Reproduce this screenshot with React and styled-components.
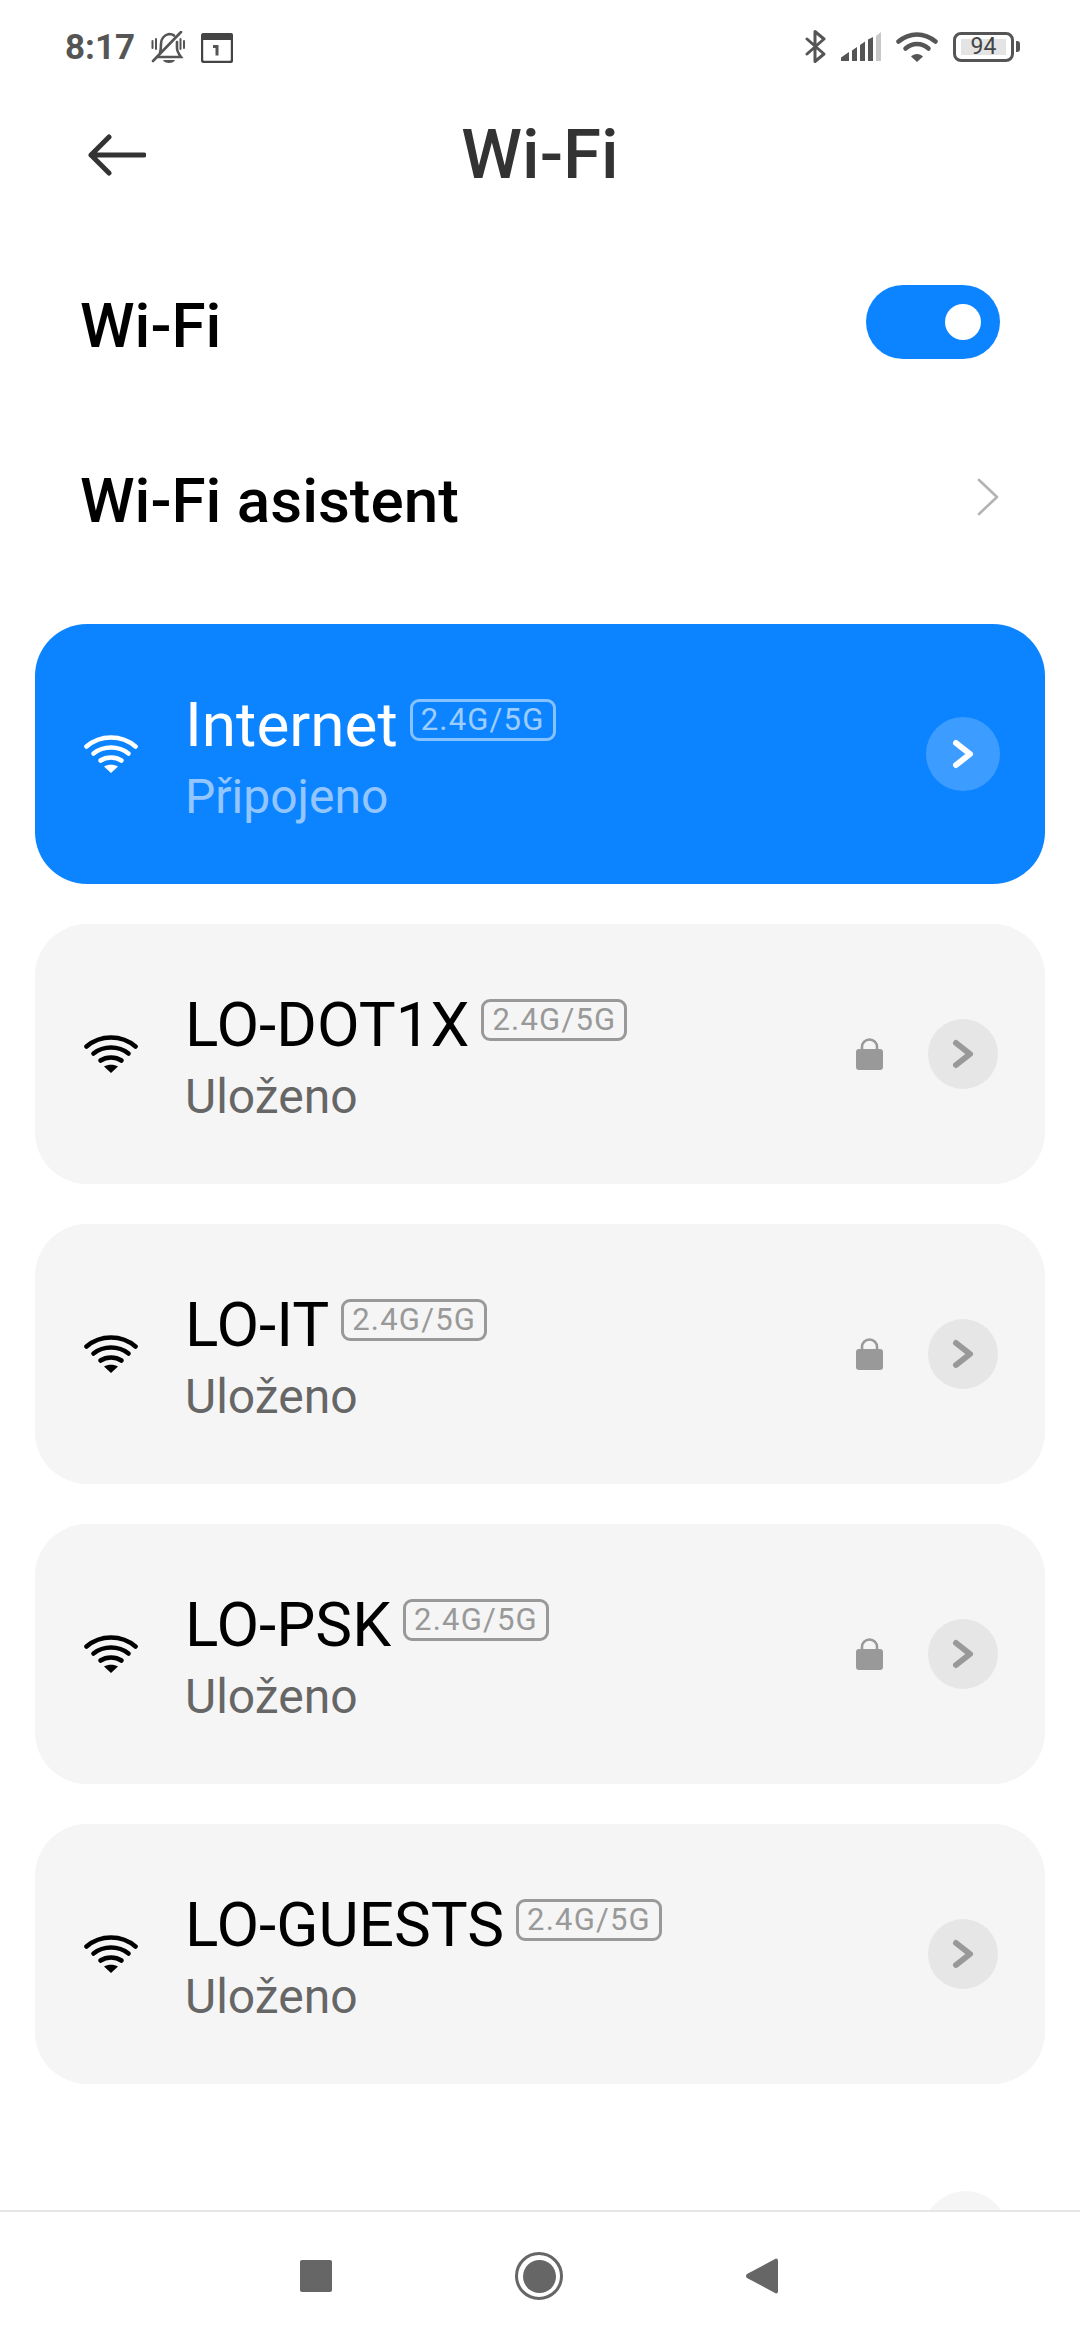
import React from 'react'
import styled, { createGlobalStyle } from 'styled-components'

const networks = [
    { name: 'Internet', status: 'Připojeno', active: true },
    { name: 'LO-DOT1X', status: 'Uloženo', locked: true },
    { name: 'LO-IT', status: 'Uloženo', locked: true },
    { name: 'LO-PSK', status: 'Uloženo', locked: true },
    { name: 'LO-GUESTS', status: 'Uloženo' },
]

const BellOff = () => (
    <svg width="36" height="34" viewBox="0 0 36 34" fill="none" stroke="#555" strokeWidth="2.600" strokeLinecap="round">
        <path d="M10 22c1-3 1-5 1-9 0-5 3-9 8-10 2 0 4 .5 5 1.500" />
        <path d="M27 11v6c0 3 1 5 4 9H7" />
        <path d="M13 29h12c-1 4-11 4-12 0z" fill="#555" stroke="none" />
        <path d="M2.500 10v7M6 8v10M30.500 8v10M34 10v7" strokeWidth="2" />
        <path d="M31 1 3 30" />
    </svg>
)

const CalendarIcon = () => (
    <svg width="32" height="30" viewBox="0 0 32 30">
        <rect x="1" y="1" width="30" height="28" rx="2" fill="none" stroke="#444" strokeWidth="2.400" />
        <rect x="1" y="1" width="30" height="6" fill="#444" />
        <path d="M12 12h5.500v10.500h-3V15H12z" fill="#555" />
    </svg>
)

const BluetoothIcon = () => (
    <svg width="21" height="33" viewBox="0 0 21 33" fill="none" stroke="#555" strokeWidth="3" strokeLinecap="round" strokeLinejoin="round">
        <path d="M2 9l17 15-9 7.500V1.500L19 9 2 24" />
    </svg>
)

const SignalIcon = () => (
    <svg width="40" height="29" viewBox="0 0 40 29">
        <path d="M0 29v-3.500l8-5.500v9z" fill="#555" />
        <path d="M11 29V18.500l5-3.500v14z" fill="#555" />
        <path d="M19 29V13l5-3.500V29z" fill="#555" />
        <path d="M27 29V7.500L32 5v24z" fill="#555" />
        <path d="M35 29V4l5-4v29z" fill="#c9c9c9" />
    </svg>
)

const StatusWifi = () => (
    <svg width="42" height="30" viewBox="0 0 42 30" fill="none" stroke="#555" strokeWidth="4.500" strokeLinecap="round">
        <path d="M2.500 9.500c11-9.500 26-9.500 37 0" />
        <path d="M9.500 16.500c7-6 16-6 23 0" />
        <path d="M21 30l-6-5.500c3-3.500 9-3.500 12 0z" fill="#555" stroke="none" />
    </svg>
)

const BackArrow = () => (
    <svg width="58" height="42" viewBox="0 0 58 42" fill="none" stroke="#333" strokeWidth="5" strokeLinecap="round" strokeLinejoin="round">
        <path d="M56 21H3M21 3 3 21l18 18" />
    </svg>
)

const Chevron = ({ color, width, height, strokeWidth, inset }) => (
    <svg width={width} height={height} viewBox={`0 0 ${width} ${height}`} fill="none" stroke={color} strokeWidth={strokeWidth} strokeLinecap="round" strokeLinejoin="round">
        <path d={`M${inset} ${inset}L${width - inset} ${height / 2}L${inset} ${height - inset}`} />
    </svg>
)

const WifiIcon = ({ color }) => (
    <svg width="54" height="38" viewBox="0 0 54 38" fill="none" stroke={color} strokeWidth="4.600" strokeLinecap="round">
        <path d="M2.500 11.500c14-12 35-12 49 0" />
        <path d="M9.500 18.500c10-8 25-8 35 0" />
        <path d="M16.500 25.500c6-4 15-4 21 0" />
        <path d="M27 38l-7-6.500c4-2.500 10-2.500 14 0z" fill={color} stroke="none" />
    </svg>
)

const LockIcon = () => (
    <svg width="27" height="32" viewBox="0 0 27 32">
        <path d="M6 13V9a7.500 7.500 0 0 1 15 0v4" fill="none" stroke="#999" strokeWidth="2.600" />
        <rect x="0" y="11" width="27" height="21" rx="3" fill="#999" />
    </svg>
)

const App = () => {
    return (
        <Page>
            <GlobalStyle />
            <StatusBar>
                <StatusGroup>
                    <Time>8:17</Time>
                    <BellOff />
                    <CalendarIcon />
                </StatusGroup>
                <StatusGroup>
                    <BluetoothIcon />
                    <SignalIcon />
                    <StatusWifi />
                    <Battery>
                        <BatteryBody>
                            <BatteryLevel>94</BatteryLevel>
                        </BatteryBody>
                        <BatteryTip />
                    </Battery>
                </StatusGroup>
            </StatusBar>
            <Header>
                <BackButton>
                    <BackArrow />
                </BackButton>
                <Title>Wi-Fi</Title>
            </Header>
            <Settings>
                <SettingRow>
                    <SettingLabel>Wi-Fi</SettingLabel>
                    <Toggle>
                        <Knob />
                    </Toggle>
                </SettingRow>
                <SettingRow>
                    <SettingLabel>Wi-Fi asistent</SettingLabel>
                    <RowChevron>
                        <Chevron color="#b3b3b3" width={22} height={38} strokeWidth={2.600} inset={2} />
                    </RowChevron>
                </SettingRow>
            </Settings>
            <List>
                {networks.map((item) => (
                    <Card key={item.name} $active={item.active}>
                        <WifiIcon color={item.active ? '#fff' : '#000'} />
                        <CardText>
                            <NameLine>
                                <Name $active={item.active}>{item.name}</Name>
                                <Badge $active={item.active}>2.4G/5G</Badge>
                            </NameLine>
                            <Status $active={item.active}>{item.status}</Status>
                        </CardText>
                        {item.locked && <LockIcon />}
                        <RoundButton $active={item.active}>
                            <Chevron color={item.active ? '#fff' : '#999'} width={22} height={30} strokeWidth={6} inset={4} />
                        </RoundButton>
                    </Card>
                ))}
                <Peek />
            </List>
            <NavBar>
                <RecentKey />
                <HomeKey>
                    <HomeDot />
                </HomeKey>
                <svg width="32" height="36" viewBox="0 0 32 36">
                    <path d="M30 0.500a2 2 0 0 1 2 2v31a2 2 0 0 1-2 2L1 20a2.500 2.500 0 0 1 0-4z" fill="#666" />
                </svg>
            </NavBar>
        </Page>
    )
}

const GlobalStyle = createGlobalStyle`
    html, body {
        margin: 0;
        padding: 0;
        background: #fff;
    }
    * {
        box-sizing: border-box;
    }
`;

const Page = styled.div`
    width: 1080px;
    height: 2340px;
    display: flex;
    flex-direction: column;
    overflow: hidden;
    background: #fff;
    font-family: Roboto, "Noto Sans", sans-serif;
`;

const StatusBar = styled.div`
    height: 92px;
    padding: 30px 60px 0 65px;
    display: flex;
    justify-content: space-between;
    align-items: flex-start;
`;

const StatusGroup = styled.div`
    display: flex;
    align-items: center;
    gap: 15px;
`;

const Time = styled.span`
    font-size: 35px;
    font-weight: 700;
    line-height: 36px;
    color: #555;
`;

const Battery = styled.div`
    display: flex;
    align-items: center;
    gap: 2px;
`;

const BatteryBody = styled.div`
    width: 61px;
    height: 30px;
    padding: 4px 5px;
    border: 3.500px solid #555;
    border-radius: 8px;
    display: flex;
`;

const BatteryLevel = styled.div`
    flex: 1;
    background: #e4e4e4;
    font-size: 23px;
    line-height: 16px;
    text-align: center;
    color: #444;
`;

const BatteryTip = styled.div`
    width: 4px;
    height: 11px;
    border-radius: 0 3px 3px 0;
    background: #555;
`;

const Header = styled.div`
    height: 122px;
    padding-left: 88px;
    display: flex;
    align-items: center;
    position: relative;
`;

const BackButton = styled.div`
    display: flex;
    margin-top: 4px;
`;

const Title = styled.h1`
    position: absolute;
    left: 0;
    right: 0;
    margin: 3px 0 0;
    text-align: center;
    font-size: 69px;
    font-weight: 500;
    color: #333;
`;

const Settings = styled.div`
    margin-top: 20px;
    margin-bottom: 40px;
    padding: 0 80px;
`;

const SettingRow = styled.div`
    height: 175px;
    display: flex;
    justify-content: space-between;
    align-items: center;
`;

const SettingLabel = styled.div`
    padding-top: 8px;
    font-size: 62px;
    font-weight: 500;
    color: #000;
`;

const Toggle = styled.div`
    width: 134px;
    height: 74px;
    padding-right: 19px;
    border-radius: 37px;
    background: #0d84ff;
    display: flex;
    justify-content: flex-end;
    align-items: center;
`;

const Knob = styled.div`
    width: 36px;
    height: 36px;
    border-radius: 50%;
    background: #fff;
`;

const RowChevron = styled.div`
    display: flex;
    margin-right: 1px;
`;

const List = styled.div`
    flex: 1;
    min-height: 0;
    padding: 0 35px;
    display: flex;
    flex-direction: column;
    gap: 40px;
    overflow: hidden;
`;

const Card = styled.div`
    height: 260px;
    flex-shrink: 0;
    padding: 0 47px 0 49px;
    border-radius: 52px;
    background: ${(p) => (p.$active ? '#0d84ff' : '#f5f5f5')};
    display: flex;
    align-items: center;
    gap: 45px;
`;

const CardText = styled.div`
    flex: 1;
    margin-left: 2px;
    padding-top: 6px;
`;

const NameLine = styled.div`
    display: flex;
    align-items: flex-start;
    gap: 12px;
`;

const Name = styled.div`
    font-size: 62px;
    line-height: 70px;
    color: ${(p) => (p.$active ? '#fff' : '#000')};
`;

const Badge = styled.div`
    height: 42px;
    margin-top: 9px;
    padding: 0 8px;
    border: 3px solid ${(p) => (p.$active ? 'rgba(255,255,255,.5)' : '#999')};
    border-radius: 9px;
    font-size: 31px;
    line-height: 36px;
    letter-spacing: 1.200px;
    color: ${(p) => (p.$active ? 'rgba(255,255,255,.6)' : '#999')};
`;

const Status = styled.div`
    margin-top: 10px;
    font-size: 48px;
    line-height: 54px;
    color: ${(p) => (p.$active ? '#93c6ff' : '#666')};
`;

const RoundButton = styled.div`
    width: ${(p) => (p.$active ? '74px' : '70px')};
    height: ${(p) => (p.$active ? '74px' : '70px')};
    margin-right: ${(p) => (p.$active ? '-2px' : '0')};
    border-radius: 50%;
    background: ${(p) => (p.$active ? '#3d9cff' : '#e6e6e6')};
    display: flex;
    justify-content: center;
    align-items: center;
`;

const Peek = styled.div`
    width: 85px;
    height: 85px;
    margin: 67px 37px 0 auto;
    flex-shrink: 0;
    border-radius: 50%;
    background: #f5f5f5;
`;

const NavBar = styled.div`
    height: 130px;
    flex-shrink: 0;
    padding-left: 300px;
    border-top: 2px solid #e6e6e6;
    background: #fff;
    display: flex;
    align-items: center;
    gap: 183px;
`;

const RecentKey = styled.div`
    width: 32px;
    height: 32px;
    border-radius: 2px;
    background: #666;
`;

const HomeKey = styled.div`
    width: 48px;
    height: 48px;
    border: 3.500px solid #666;
    border-radius: 50%;
    display: flex;
    justify-content: center;
    align-items: center;
`;

const HomeDot = styled.div`
    width: 33px;
    height: 33px;
    border-radius: 50%;
    background: #666;
`;

export default App
